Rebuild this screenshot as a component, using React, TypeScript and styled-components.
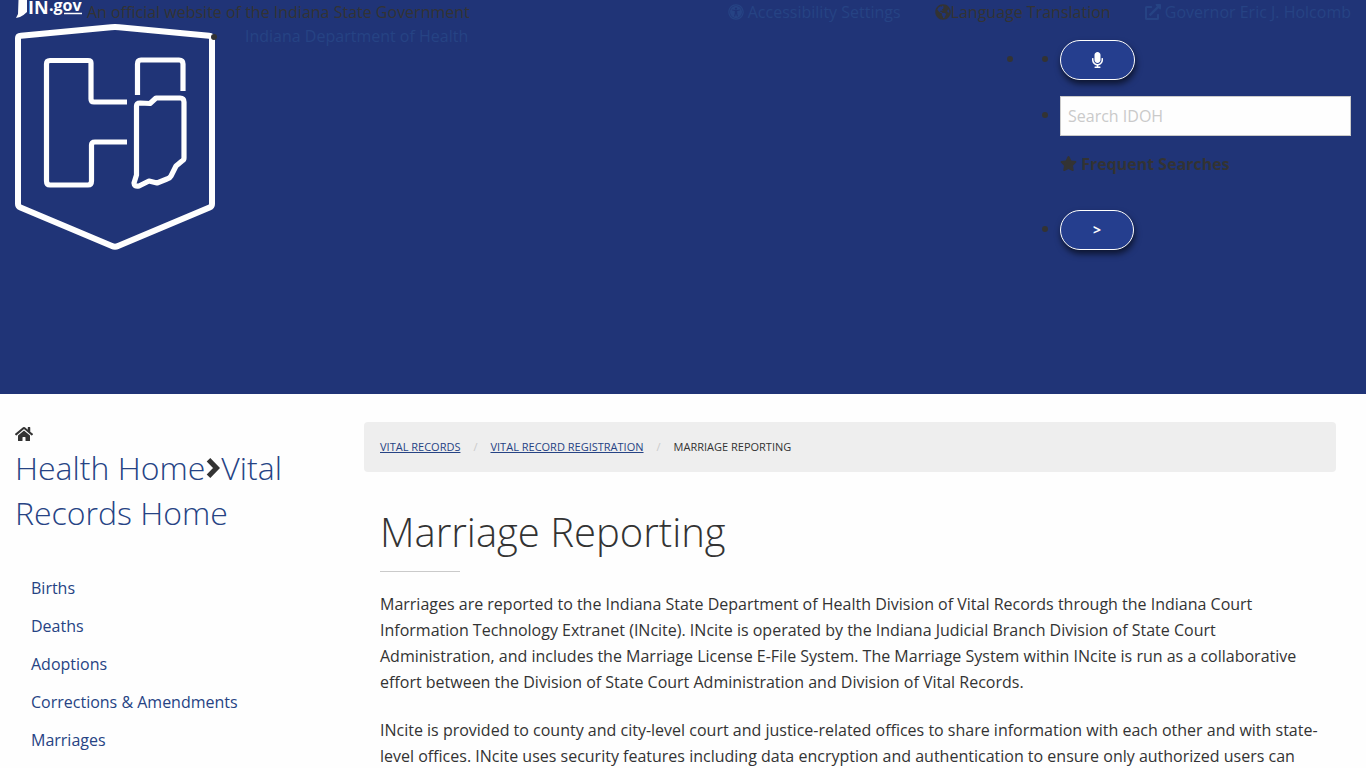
import React from "react";
import styled, { createGlobalStyle, css } from "styled-components";
import {
  FaUniversalAccess,
  FaGlobeAmericas,
  FaExternalLinkAlt,
  FaMicrophone,
  FaStar,
  FaHome,
} from "react-icons/fa";

const GlobalStyle = createGlobalStyle`
  *, *::before, *::after { box-sizing: border-box; }
  html, body { height: 100%; }
  body {
    margin: 0;
    overflow: hidden;
    background: #fefefe;
    color: #333333;
    font-family: "Open Sans", "Noto Sans", sans-serif;
    font-size: 16px;
    line-height: 24px;
  }
  #root { height: 100%; overflow: hidden; }
  a { color: #264384; text-decoration: none; }
  ul, ol, p, h1, h2 { margin: 0; padding: 0; }
`;

const Header = styled.header`
  background: #203477;
  min-height: 394px;
  padding: 0 15px;
`;

const TopBar = styled.div`
  display: flex;
  justify-content: space-between;
`;

const Official = styled.div`
  display: flex;
  gap: 5px;

  svg { display: block; }
`;

const Utilities = styled.div`
  display: flex;
  gap: 34px;
`;

const inlineIcon = css`
  svg { vertical-align: -2px; }
`;

const UtilityLink = styled.a`
  ${inlineIcon}
`;

const UtilityText = styled.span`
  ${inlineIcon}
`;

const Masthead = styled.div`
  display: flex;
  justify-content: space-between;
`;

const Brand = styled.div`
  display: flex;
  align-items: flex-start;
  gap: 14px;
`;

const ShieldLink = styled.a`
  display: block;

  svg { display: block; }
`;

const DepartmentList = styled.ul`
  list-style: disc;

  a { padding-left: 16px; }
`;

const SearchArea = styled.ul`
  width: 326px;
  padding-top: 16px;
  list-style: disc;
`;

const SearchList = styled.ul`
  padding-left: 35px;
  list-style: disc;
`;

const MicItem = styled.li`
  height: 56px;
`;

const SubmitItem = styled.li`
  margin-top: 34px;
`;

const PillButton = styled.button`
  min-width: 74px;
  height: 40px;
  padding: 0 31px;
  border: 1px solid #fefefe;
  border-radius: 20px;
  background: #253e8e;
  color: #fefefe;
  font-family: inherit;
  font-size: 14px;
  font-weight: 700;
  line-height: 16px;
  vertical-align: middle;
  box-shadow: 1px 4px 6px rgba(0, 0, 0, 0.6);

  svg { display: block; width: 11px; height: 16px; }
`;

const SearchInput = styled.input`
  width: 100%;
  height: 40px;
  padding: 7px;
  border: 1px solid #cacaca;
  border-radius: 0;
  background: #fefefe;
  color: #333333;
  font: inherit;
  vertical-align: middle;

  &::placeholder { color: #cacaca; opacity: 1; }
`;

const Frequent = styled.strong`
  display: block;
  margin-top: 16px;
  ${inlineIcon}
`;

const Page = styled.div`
  display: grid;
  grid-template-columns: minmax(0, 1fr) minmax(0, 3fr);
  gap: 25px;
  padding: 28px 30px 0 15px;
`;

const HomeLinks = styled.div`
  > svg { display: block; margin: 3px 0 2px; }
`;

const HomeTitle = styled.h2`
  font-size: 32px;
  font-weight: 300;
  line-height: 45px;

  svg { vertical-align: 2px; }
`;

const SideNav = styled.nav`
  margin-top: 41px;
  padding-left: 16px;
`;

const SideList = styled.ul`
  display: grid;
  gap: 14px;
  list-style: none;
`;

const Main = styled.main`
  min-width: 0;
`;

const Crumbs = styled.nav`
  padding: 13px 16px;
  border-radius: 4px;
  background: #eeeeee;
`;

const CrumbList = styled.ol`
  display: flex;
  list-style: none;
  font-size: 11px;
  text-transform: uppercase;

  li + li::before {
    content: "/";
    margin: 0 13px;
    color: #cacaca;
  }
  a { text-decoration: underline; }
`;

const Article = styled.article`
  padding: 32px 8px 0 16px;
`;

const Title = styled.h1`
  font-size: 40px;
  font-weight: 300;
  line-height: 56px;

  &::after {
    content: "";
    display: block;
    width: 80px;
    margin: 11px 0 19px;
    border-top: 1px solid #cacaca;
  }
`;

const Paragraph = styled.p`
  line-height: 26px;

  & + & { margin-top: 22px; }
`;

const InGovLogo = () => (
  <svg width="67" height="24" viewBox="0 0 67 24" role="img" aria-label="IN.gov">
    <path d="M3.500 0H12V12L8.500 15L5 17L1 18L3 14Z" fill="#fefefe" />
    <text x="13" y="14" fill="#fefefe" fontFamily="Open Sans" fontSize="18" fontWeight="700">IN</text>
    <text x="34" y="11" fill="#fefefe" fontFamily="Open Sans" fontSize="16" fontWeight="700">.gov</text>
    <path d="M49 13.500H67" stroke="#fefefe" strokeWidth="1.500" />
  </svg>
);

const Shield = () => (
  <svg width="200" height="226" viewBox="0 0 200 226" fill="none" stroke="#fefefe" strokeWidth="5.200" strokeLinejoin="round" role="img" aria-label="Indiana Department of Health">
    <path d="M3 14Q3 12 6 11.700L96 3.200Q100 2.800 104 3.200L194 11.700Q197 12 197 15V180Q197 182.500 194.500 183.600L103 222Q100 223.400 97 222L5.500 183.600Q3 182.500 3 180Z" strokeWidth="6" />
    <path d="M112 78H79Q76 78 76 75V39Q76 36.500 73 36.500H35Q31.500 36.500 31.500 40V157Q31.500 161 35 161H73Q76.500 161 76.500 157V121Q76.500 118 80 118H112" />
    <path d="M122.500 71V40Q122.500 36 126 36H164Q168 36 168 40V67" />
    <path d="M121.500 82Q121.500 79 125 79L135 79.500L141 74H165Q169 74 169 78V134Q169 136 167 137L161 142L156 152Q155 154 152 155L142 159L134 157L124 162Q119 163 119 159L121.500 151Z" />
  </svg>
);

const Chevron = () => (
  <svg width="16" height="20" viewBox="0 0 16 20" fill="none" stroke="#333333" strokeWidth="5" aria-hidden="true">
    <path d="M3.500 1.800L11.500 10L3.500 18.200" />
  </svg>
);

const sideLinks = ["Births", "Deaths", "Adoptions", "Corrections & Amendments", "Marriages"];

const App = () => (
  <>
    <GlobalStyle />
    <Header>
      <TopBar>
        <Official>
          <a href="#in-gov"><InGovLogo /></a>
          <span>An official website of the Indiana State Government</span>
        </Official>
        <Utilities>
          <UtilityLink href="#accessibility"><FaUniversalAccess /> Accessibility Settings</UtilityLink>
          <UtilityText><FaGlobeAmericas />Language Translation</UtilityText>
          <UtilityLink href="#governor"><FaExternalLinkAlt /> Governor Eric J. Holcomb</UtilityLink>
        </Utilities>
      </TopBar>
      <Masthead>
        <Brand>
          <ShieldLink href="#home"><Shield /></ShieldLink>
          <DepartmentList>
            <li><a href="#department">Indiana Department of Health</a></li>
          </DepartmentList>
        </Brand>
        <SearchArea>
          <li>
            <SearchList>
              <MicItem><PillButton type="button" aria-label="Voice search"><FaMicrophone /></PillButton></MicItem>
              <li>
                <SearchInput type="text" placeholder="Search IDOH" aria-label="Search IDOH" />
                <Frequent><FaStar size={17} /> Frequent Searches</Frequent>
              </li>
              <SubmitItem><PillButton type="submit">&gt;</PillButton></SubmitItem>
            </SearchList>
          </li>
        </SearchArea>
      </Masthead>
    </Header>
    <Page>
      <aside>
        <HomeLinks>
          <FaHome size={18} />
          <HomeTitle><a href="#health">Health Home</a><Chevron /><a href="#vital">Vital Records Home</a></HomeTitle>
        </HomeLinks>
        <SideNav aria-label="Vital Records">
          <SideList>
            {sideLinks.map((label) => <li key={label}><a href="#section">{label}</a></li>)}
          </SideList>
        </SideNav>
      </aside>
      <Main>
        <Crumbs aria-label="Breadcrumb">
          <CrumbList>
            <li><a href="#vital">Vital Records</a></li>
            <li><a href="#registration">Vital Record Registration</a></li>
            <li>Marriage Reporting</li>
          </CrumbList>
        </Crumbs>
        <Article>
          <Title>Marriage Reporting</Title>
          <Paragraph>Marriages are reported to the Indiana State Department of Health Division of Vital Records through the Indiana Court Information Technology Extranet (INcite). INcite is operated by the Indiana Judicial Branch Division of State Court Administration, and includes the Marriage License E-File System. The Marriage System within INcite is run as a collaborative effort between the Division of State Court Administration and Division of Vital Records.</Paragraph>
          <Paragraph>INcite is provided to county and city-level court and justice-related offices to share information with each other and with state-level offices. INcite uses security features including data encryption and authentication to ensure only authorized users can</Paragraph>
        </Article>
      </Main>
    </Page>
  </>
);

export default App;
